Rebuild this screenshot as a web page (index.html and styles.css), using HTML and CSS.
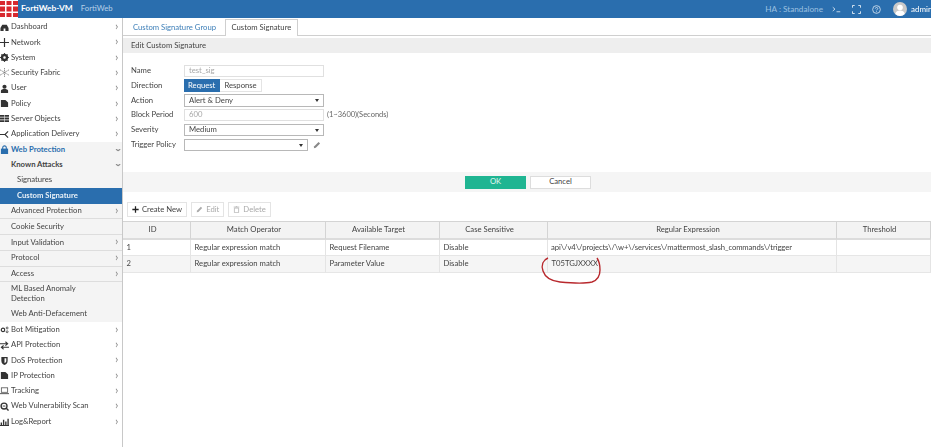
FILE: index.html
```html
<!DOCTYPE html>
<html lang="en">
<head>
<meta charset="utf-8">
<title>FortiWeb-VM</title>
<link rel="stylesheet" href="styles.css">
</head>
<body>
<header class="topbar">
  <svg class="logo" viewBox="0 0 18 18"><rect width="18" height="18" fill="#fff"/><path d="M0 1h5v4H0zM6.500 1h5v4h-5zM13 1h5v4h-5zM0 6.500h5v5H0zM6.500 6.500h5v5h-5zM13 6.500h5v5h-5zM0 13h5v4H0zM6.500 13h5v4h-5zM13 13h5v4h-5z" fill="#d8292f"/></svg>
  <span class="brand">FortiWeb-VM</span>
  <span class="host">FortiWeb</span>
  <span class="spacer"></span>
  <span class="ha">HA : Standalone</span>
  <svg class="ticon t1" viewBox="0 0 12 10"><path d="M1 2l3 2.500L1 7M6 8h5" fill="none" stroke="#dce8f3" stroke-width="1.100"/></svg>
  <svg class="ticon t2" viewBox="0 0 10 10"><path d="M.5 3V.5H3M7 .5h2.500V3M9.500 7v2.500H7M3 9.500H.5V7" fill="none" stroke="#dce8f3" stroke-width="1.100"/></svg>
  <svg class="ticon t3" viewBox="0 0 10 10"><circle cx="5" cy="5" r="4.300" fill="none" stroke="#dce8f3" stroke-width=".9"/><path d="M3.700 4c0-1.700 2.700-1.700 2.700 0 0 1-1.400 1-1.400 2M5 7v1" fill="none" stroke="#dce8f3" stroke-width=".9"/></svg>
  <svg class="avatar" viewBox="0 0 14 14"><circle cx="7" cy="7" r="7" fill="#c9c9c9"/><circle cx="7" cy="5.500" r="2.800" fill="#fff"/><path d="M2.200 12c.6-3 2.500-3.600 4.800-3.600s4.200.6 4.800 3.600a7 7 0 0 1-9.600 0z" fill="#fff"/></svg>
  <span class="admin">admin</span>
</header>
<div class="shell">
  <nav class="sidebar">
    <a class="nav"><svg class="ni" viewBox="0 0 10 10"><path d="M.5 9V5.500L2.500 2h5l2 3.500V9H6V6H4v3z" fill="#333"/></svg><span class="lbl">Dashboard</span><i class="chev">›</i></a>
    <a class="nav"><svg class="ni" viewBox="0 0 10 10"><path d="M5 0v10M0 5h10" stroke="#333" stroke-width="1.300"/></svg><span class="lbl">Network</span><i class="chev">›</i></a>
    <a class="nav"><svg class="ni" viewBox="0 0 10 10"><circle cx="5" cy="5" r="3" fill="none" stroke="#333" stroke-width="2.200"/><path d="M5 0v10M0 5h10M1.500 1.500l7 7M8.500 1.500l-7 7" stroke="#333" stroke-width="1"/><circle cx="5" cy="5" r="1.300" fill="#fff"/></svg><span class="lbl">System</span><i class="chev">›</i></a>
    <a class="nav"><svg class="ni" viewBox="0 0 10 10"><path d="M5 0v10M0 2l10 6M10 2L0 8" stroke="#777" stroke-width=".9" stroke-dasharray="1.500 .6"/></svg><span class="lbl">Security Fabric</span><i class="chev">›</i></a>
    <a class="nav"><svg class="ni" viewBox="0 0 10 10"><circle cx="5" cy="3" r="2.300" fill="#333"/><path d="M1 10V7.500C1 6 3 5.500 5 5.500S9 6 9 7.500V10z" fill="#333"/></svg><span class="lbl">User</span><i class="chev">›</i></a>
    <a class="nav"><svg class="ni" viewBox="0 0 10 10"><path d="M1 1h5l3 3v5H1z" fill="#333"/></svg><span class="lbl">Policy</span><i class="chev">›</i></a>
    <a class="nav"><svg class="ni" viewBox="0 0 10 10"><path d="M0 2h10M0 5h10M0 8h10" stroke="#333" stroke-width="2"/><path d="M5 0v10" stroke="#fff" stroke-width=".6"/></svg><span class="lbl">Server Objects</span><i class="chev">›</i></a>
    <a class="nav"><svg class="ni" viewBox="0 0 10 10"><path d="M0 5h6M9 1.500L5.500 5 9 8.500" fill="none" stroke="#333" stroke-width="1.200"/></svg><span class="lbl">Application Delivery</span><i class="chev">›</i></a>
    <a class="nav open"><svg class="ni" viewBox="0 0 10 10"><rect x="1" y="4" width="8" height="6" fill="#2a6eae"/><path d="M3 4.500V3a2 2 0 0 1 4 0v1.500" fill="none" stroke="#2a6eae" stroke-width="1.200"/></svg><span class="lbl">Web Protection</span><i class="chev down">›</i></a>
    <div class="sub">
      <a class="nav known"><span class="lbl">Known Attacks</span><i class="chev down">›</i></a>
      <a class="nav deep"><span class="lbl">Signatures</span></a>
      <a class="nav deep current"><span class="lbl">Custom Signature</span></a>
      <a class="nav group"><span class="lbl">Advanced Protection</span><i class="chev">›</i></a>
      <a class="nav group"><span class="lbl">Cookie Security</span></a>
      <a class="nav group"><span class="lbl">Input Validation</span><i class="chev">›</i></a>
      <a class="nav group"><span class="lbl">Protocol</span><i class="chev">›</i></a>
      <a class="nav group"><span class="lbl">Access</span><i class="chev">›</i></a>
      <a class="nav group tall"><span class="lbl">ML Based Anomaly Detection</span></a>
      <a class="nav group last"><span class="lbl">Web Anti-Defacement</span></a>
    </div>
    <a class="nav"><svg class="ni" viewBox="0 0 12 10"><circle cx="4" cy="5.500" r="2.300" fill="none" stroke="#333" stroke-width="1.500"/><circle cx="9.500" cy="3" r="1.300" fill="none" stroke="#333" stroke-width="1"/><circle cx="9.500" cy="8" r="1.300" fill="none" stroke="#333" stroke-width="1"/></svg><span class="lbl">Bot Mitigation</span><i class="chev">›</i></a>
    <a class="nav"><svg class="ni" viewBox="0 0 10 10"><path d="M0 3h8M6 .8L8.500 3 6 5.200M10 7H2M4 4.800L1.500 7 4 9.200" fill="none" stroke="#333" stroke-width="1.200"/></svg><span class="lbl">API Protection</span><i class="chev">›</i></a>
    <a class="nav"><svg class="ni" viewBox="0 0 10 10"><path d="M1.500 1h7v4.500C8.500 8 6.500 9.300 5 10 3.500 9.300 1.500 8 1.500 5.500z" fill="#333"/><path d="M5 2.500h2v3c0 1-1 1.700-2 2.300z" fill="#fff"/></svg><span class="lbl">DoS Protection</span><i class="chev">›</i></a>
    <a class="nav"><svg class="ni" viewBox="0 0 10 10"><path d="M1 1h5l3 3v5H1z" fill="#333"/></svg><span class="lbl">IP Protection</span><i class="chev">›</i></a>
    <a class="nav"><svg class="ni" viewBox="0 0 10 10"><rect x="1.500" y="2" width="7" height="5" fill="none" stroke="#555" stroke-width=".9"/><path d="M0 8.500h10" stroke="#555" stroke-width="1.100"/></svg><span class="lbl">Tracking</span><i class="chev">›</i></a>
    <a class="nav"><svg class="ni" viewBox="0 0 10 10"><circle cx="4.500" cy="4.500" r="3.300" fill="none" stroke="#333" stroke-width="1.500"/><path d="M7 7l2.500 2.500" stroke="#333" stroke-width="1.600"/><path d="M3 4.500h3" stroke="#333" stroke-width="1"/></svg><span class="lbl">Web Vulnerability Scan</span><i class="chev">›</i></a>
    <a class="nav"><svg class="ni" viewBox="0 0 10 10"><path d="M0 9.500h10M1.500 9V6M4 9V3M6.500 9V5M9 9V2" stroke="#333" stroke-width="1.500"/></svg><span class="lbl">Log&amp;Report</span><i class="chev">›</i></a>
  </nav>
  <main class="main">
    <div class="tabs">
      <a class="tab">Custom Signature Group</a>
      <a class="tab active">Custom Signature</a>
    </div>
    <h2 class="title">Edit Custom Signature</h2>
    <form class="form">
      <div class="row"><label>Name</label><div class="field disabled">test_sig</div></div>
      <div class="row"><label>Direction</label><div class="toggle"><span class="on">Request</span><span class="off">Response</span></div></div>
      <div class="row"><label>Action</label><div class="field select">Alert &amp; Deny<b class="caret"></b></div></div>
      <div class="row"><label>Block Period</label><div class="field disabled">600</div><span class="hint">(1~3600)(Seconds)</span></div>
      <div class="row"><label>Severity</label><div class="field select">Medium<b class="caret"></b></div></div>
      <div class="row"><label>Trigger Policy</label><div class="field select short"><b class="caret"></b></div><svg class="pencil" viewBox="0 0 10 10"><path d="M1 9l.6-2.500L7 1.200 8.800 3 3.500 8.400z" fill="#888"/></svg></div>
    </form>
    <div class="actions">
      <button class="btn ok" type="button">OK</button>
      <button class="btn cancel" type="button">Cancel</button>
    </div>
    <div class="toolbar">
      <button class="tool create" type="button"><svg viewBox="0 0 10 10"><path d="M5 .5v9M.5 5h9" stroke="#222" stroke-width="1.800"/></svg>Create New</button>
      <button class="tool dim" type="button"><svg viewBox="0 0 10 10"><path d="M1 9l.6-2.500L7 1.200 8.800 3 3.500 8.400z" fill="#aaa"/></svg>Edit</button>
      <button class="tool dim" type="button"><svg viewBox="0 0 10 10"><path d="M2 3h6v6.500H2zM1 1.500h8M4 .5h2" fill="none" stroke="#aaa" stroke-width="1"/></svg>Delete</button>
    </div>
    <div class="table">
      <div class="cell head">ID</div><div class="cell head">Match Operator</div><div class="cell head">Available Target</div><div class="cell head">Case Sensitive</div><div class="cell head">Regular Expression</div><div class="cell head">Threshold</div>
      <div class="cell">1</div><div class="cell">Regular expression match</div><div class="cell">Request Filename</div><div class="cell">Disable</div><div class="cell regex">api\/v4\/projects\/\w+\/services\/mattermost_slash_commands\/trigger</div><div class="cell"></div>
      <div class="cell alt">2</div><div class="cell alt">Regular expression match</div><div class="cell alt">Parameter Value</div><div class="cell alt">Disable</div><div class="cell alt">T05TGJXXXX</div><div class="cell alt"></div>
    </div>
  </main>
</div>
<svg class="scribble" viewBox="0 0 64 32"><path d="M8 2C3 4 1 9 3 15c2 6 8 10 17 11 10 1 24 2 32 0 6-2 8-6 8-12 0-5-1-9-3-12" fill="none" stroke="#b8282d" stroke-width="1.400"/></svg>
</body>
</html>
```
FILE: styles.css
```css
* { box-sizing: border-box; }
html, body { margin: 0; height: 100%; overflow: hidden; }
body { background: #fff; color: #444; font: 7.700px/1 Lato, "Open Sans", sans-serif; filter: blur(.45px); position: relative; }
.topbar { height: 18px; background: #2a6eae; display: flex; align-items: center; color: #dce8f3; }
.logo { width: 18px; height: 18px; flex: none; }
.brand { color: #fff; font-weight: 700; font-size: 8.400px; margin-left: 3px; padding-bottom: 1px; }
.host { color: #b6d0e8; font-size: 7.700px; margin-left: 8px; padding-bottom: 1px; }
.spacer { flex: 1; }
.ha { color: #9cc0e0; font-size: 8.200px; margin-right: 9px; }
.ticon { width: 9px; height: 9px; }
.t1 { margin-right: 11px; }
.t2 { margin-right: 11px; }
.t3 { margin-right: 12px; }
.avatar { width: 14px; height: 14px; margin-right: 4px; }
.admin { color: #fff; font-size: 8px; width: 20px; white-space: nowrap; }
.shell { display: flex; height: 429px; }
.sidebar { width: 123px; flex: none; border-right: 1px solid #c8c8c8; padding-top: 1.500px; }
.nav { display: flex; align-items: center; height: 15.300px; padding-left: 11px; position: relative; color: #444; }
.ni { position: absolute; left: 0; top: 3px; width: 9px; height: 9px; }
.lbl { flex: 1; }
.chev { font-style: normal; color: #888; font-size: 12px; width: 7px; flex: none; line-height: 1; margin-top: -2px; }
.chev.down { transform: rotate(90deg); text-align: center; margin-top: 0; }
.open { background: #f4f4f4; color: #2a6eae; font-weight: 700; }
.sub { background: #f4f4f4; }
.known { font-weight: 700; color: #444; background: #f4f4f4; }
.deep { padding-left: 17px; }
.current { background: #2a6eae; color: #e8f0f7; font-weight: 700; height: 16px; }
.group { height: 15.700px; border-bottom: 1px solid #ddd; }
.tall { height: 24px; line-height: 10.300px; border-bottom: 0; padding: 0 30px 2px 11px; }
.last { border-bottom: 0; height: 16px; }
.main { flex: 1; min-width: 0; display: flex; flex-direction: column; }
.tabs { height: 18px; display: flex; padding: 1px 0 0 3px; border-bottom: 1px solid #cfcfcf; gap: 2px; }
.tab { padding: 0 7px; color: #3d7fb8; display: flex; align-items: center; height: 17px; }
.tab.active { background: #fff; color: #444; border: 1px solid #cfcfcf; border-bottom: 0; padding: 0 5.500px; }
.title { margin: 2px 0 0; height: 15px; background: #eee; font: inherit; display: flex; align-items: center; padding-left: 8px; color: #444; }
.form { padding: 10.400px 0 0 8px; height: 119px; }
.row { display: flex; align-items: center; height: 14.800px; }
.row label { width: 53px; flex: none; }
.field { width: 140px; height: 12.500px; border: 1px solid #e0e0e0; padding: 0 4px; display: flex; align-items: center; position: relative; }
.disabled { color: #a8a8a8; }
.select { border-color: #b8b8b8; }
.short { width: 124px; }
.caret { position: absolute; right: 4px; top: 4px; border: 2.500px solid transparent; border-top: 3px solid #333; border-bottom: 0; }
.hint { margin-left: 3px; color: #666; font-size: 7.500px; }
.pencil { width: 8px; height: 8px; margin-left: 5px; }
.toggle { display: flex; height: 12.500px; margin-left: -.5px; }
.toggle span { display: flex; align-items: center; padding: 0 4.500px; }
.on { background: #2a6eae; color: #fff; }
.off { border: 1px solid #e4e4e4; border-left: 0; }
.actions { height: 20px; background: #f5f5f5; display: flex; align-items: center; justify-content: center; gap: 4px; padding-left: 2px; }
.btn { width: 61px; height: 13px; border: 0; padding: 0; font: inherit; display: block; }
.ok { background: #1fb592; color: #e6f7f3; }
.cancel { background: #fff; border: 1px solid #ddd; color: #444; }
.toolbar { display: flex; gap: 4px; padding: 10px 0 0 4px; height: 28px; }
.tool { height: 15px; border: 1px solid #e4e4e4; background: #fff; font: inherit; display: flex; align-items: center; gap: 3px; padding: 0 4px; color: #444; }
.tool svg { width: 7px; height: 7px; }
.dim { color: #aaa; }
.table { display: grid; grid-template-columns: 68px 135px 114px 108px 289px 94px; grid-template-rows: 19px 16px 17px; margin-top: 1px; }
.cell { display: flex; align-items: center; padding-left: 3.500px; border-bottom: 1px solid #e6e6e6; border-right: 1px solid #e4e4e4; white-space: nowrap; overflow: hidden; }
.regex { letter-spacing: -.1px; padding-left: 3px; }
.head { background: #f3f3f3; justify-content: center; padding: 0 8px 0 0; border-top: 1px solid #d4d4d4; border-right: 1px solid #d4d4d4; border-bottom: 2px solid #dcdcdc; }
.alt { background: #f5f5f5; }
.scribble { position: absolute; left: 540px; top: 256px; width: 64px; height: 32px; }
```
